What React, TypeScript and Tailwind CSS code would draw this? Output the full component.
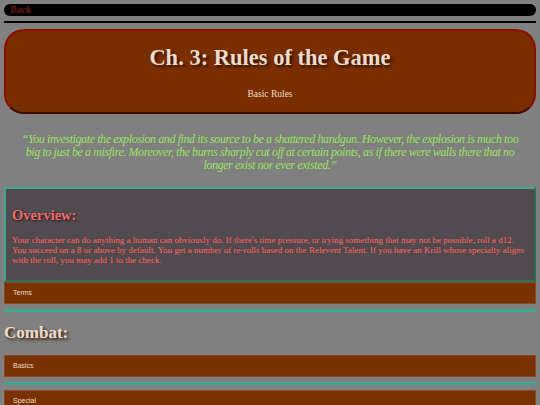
import React from 'react';

// collapsible-looking section bar
const SectionBar: React.FC<{ label: string }> = ({ label }) => (
    <div className="h-[22px] flex items-center px-2 bg-[#7a3100] border border-[#8a4a2c] text-[7px] text-[#ecdcc8] font-['Liberation_Sans',Arial,sans-serif]">
        {label}
    </div>
);

const Divider: React.FC = () => <div className="h-[3px] bg-[#3ea88c] my-[5px]" />;

const App: React.FC = () => {
    return (
        <div className="min-h-screen w-full bg-[#808080] px-[4px] pt-[4px] overflow-hidden font-['Liberation_Serif','Times_New_Roman',serif]">
            {/* nav */}
            <div className="h-[12px] rounded-full bg-black flex items-center px-[6px]">
                <span className="text-[10px] italic font-bold text-[#6a1c1c] leading-none">Back</span>
            </div>
            <div className="h-[2px] bg-black mt-[5px]" />

            {/* chapter header */}
            <div className="mt-[6px] h-[85px] rounded-[20px] bg-[#7a2e00] border-2 border-[#8e0c00] border-b-[#3a0800] flex flex-col items-center">
                <h1 className="text-[22.5px] font-bold text-[#ecdccc] mt-[13px] leading-[28px] [text-shadow:2px_2px_3px_#2a0e00]">
                    Ch. 3: Rules of the Game
                </h1>
                <p className="text-[9.5px] text-[#ecdccc] mt-[15px]">Basic Rules</p>
            </div>

            {/* flavour quote */}
            <p className="mt-[19px] px-[12px] text-center italic text-[12px] tracking-[-0.4px] leading-[13px] text-[#a9d87c] [text-shadow:0_0_2px_#5f9a4a]">
                “You investigate the explosion and find its source to be a shattered handgun. However, the explosion is much too
                big to just be a misfire. Moreover, the burns sharply cut off at certain points, as if there were walls there that no
                longer exist nor ever existed.”
            </p>

            {/* overview */}
            <div className="mt-[15px] h-[95px] bg-[#514b50] border-2 border-[#3ea88c] border-r-[#2a6e55] border-b-[#2a6e55] px-[6px] pt-[17px]">
                <h2 className="text-[14.5px] font-bold text-[#e86e6c] leading-[18px] [text-shadow:1px_1px_2px_#2a1010]">
                    Overview:
                </h2>
                <p className="mt-[11px] text-[9px] leading-[10px] text-[#e8716c] [text-shadow:0_0_1px_#8a3030]">
                    Your character can do anything a human can obviously do. If there's time pressure, or trying something that may not be possible, roll a d12.
                    You succeed on a 8 or above by default. You get a number of re-rolls based on the Relevent Talent. If you have an Krill whose specialty aligns
                    with the roll, you may add 1 to the check.
                </p>
            </div>
            <SectionBar label="Terms" />
            <Divider />

            <h2 className="text-[17px] font-bold text-[#ecdccc] leading-[22px] mt-[10px] mb-[11px] [text-shadow:2px_2px_3px_#3a1a08]">
                Combat:
            </h2>
            <SectionBar label="Basics" />
            <Divider />
            <SectionBar label="Special" />
        </div>
    );
};

export default App;
